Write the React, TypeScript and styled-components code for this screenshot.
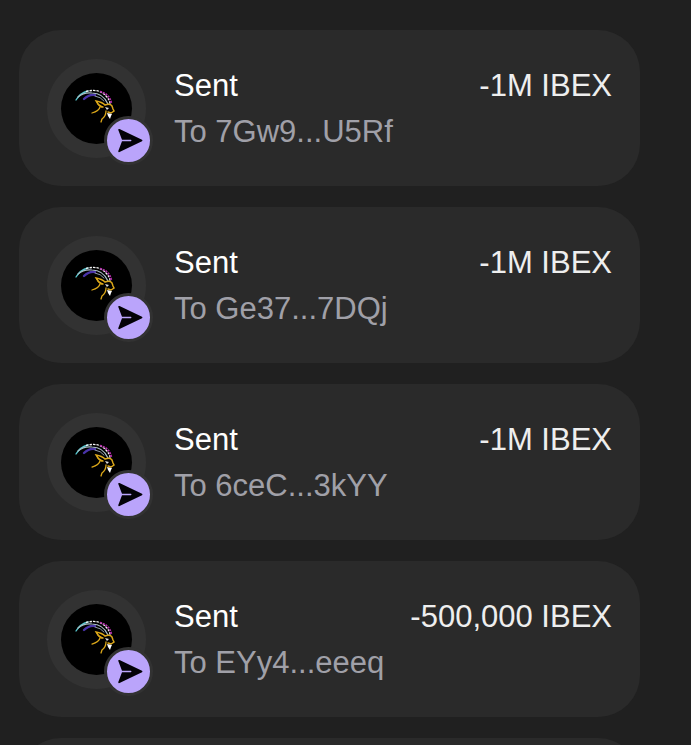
import React from "react";
import styled, { createGlobalStyle } from "styled-components";

const GlobalStyle = createGlobalStyle`
  * { box-sizing: border-box; }
  html { background: #202020; }
  body {
    margin: 0;
    background: #202020;
    color: #fff;
    font-family: "Liberation Sans", Arial, sans-serif;
  }
`;

const List = styled.ul`
  display: flex;
  flex-direction: column;
  gap: 21px;
  height: 100vh;
  overflow: hidden;
  margin: 0;
  padding: 30px 51px 0 19px;
  list-style: none;
`;

const Card = styled.li`
  display: flex;
  flex: none;
  gap: 28px;
  min-height: 156px;
  padding: 29px 28px 28px;
  border-radius: 42px;
  background: #2a2a2a;
`;

const Avatar = styled.div`
  position: relative;
  flex: none;
  display: grid;
  place-items: center;
  width: 99px;
  height: 99px;
  border-radius: 50%;
  background: #323232;
`;

const TokenIcon = styled.svg`
  width: 71px;
  height: 71px;
  border-radius: 50%;
  background: #000;
`;

const Badge = styled.span`
  position: absolute;
  right: -7px;
  bottom: -7px;
  width: 49px;
  height: 49px;
  border: 3px solid #323232;
  border-radius: 50%;
  background: #baa4fb;

  svg {
    display: block;
    width: 43px;
    height: 43px;
  }
`;

const Details = styled.div`
  flex: 1;
  min-width: 0;
  padding-top: 4px;
  font-size: 31px;
  line-height: 46px;
  white-space: nowrap;
`;

const Summary = styled.div`
  display: flex;
  justify-content: space-between;
  gap: 16px;
`;

const Amount = styled.span`
  color: #eee;
`;

const Recipient = styled.div`
  color: #a0a0a8;
`;

const IbexLogo = () => (
  <TokenIcon viewBox="0 0 71 71" fill="none" strokeLinecap="round" aria-hidden="true">
    <path d="M15 27Q19 20 27 18" stroke="#58c9d1" strokeWidth="1.3" />
    <path d="M23 26Q28 21 34 22" stroke="#4933a9" strokeWidth="2.4" />
    <path d="M17 24Q23 19 31 20Q42 20 47 31" stroke="#a9bcc4" strokeWidth="1.2" />
    <path d="M34 23Q40 24 43 28" stroke="#8f9aa8" strokeWidth="1" />
    <path d="M25 18.5Q38 15 45 23Q49 27 49 31" stroke="#f4f4f4" strokeWidth="1.3" strokeDasharray="2.5 1" strokeLinecap="butt" />
    <path d="M39 18.5Q49 21 50.500 31" stroke="#b32dab" strokeWidth="1.8" strokeDasharray="2 1" strokeLinecap="butt" />
    <path d="M41 34Q37 32 35 28Q41 29 44 32Q49 30 51 33L52 36L53 38L50 40L47 39" stroke="#dba719" strokeWidth="1.5" />
    <path d="M36 29Q37 33 42 34M39 34Q38 38 31 40M45 38Q45 43 41 46L40 49" stroke="#dba719" strokeWidth="1.3" />
    <path d="M44 34L48 35L46 37Z" fill="#ddd" />
    <path d="M46 40L51 41L50 43L49 46L47 43Z" fill="#fff" />
  </TokenIcon>
);

const SendIcon = () => (
  <svg viewBox="0 0 43 43" aria-hidden="true">
    <path
      d="M12.5 10L35 20.8Q36 21.5 35 22.2L12.5 33Q11 33.5 11.3 32L15 22.3H24Q25 21.5 24 20.7H15L11.3 11Q11 9.5 12.5 10Z"
      fill="#030207"
    />
  </svg>
);

const transfers = [
  { id: 1, recipient: "7Gw9...U5Rf", amount: "-1M IBEX" },
  { id: 2, recipient: "Ge37...7DQj", amount: "-1M IBEX" },
  { id: 3, recipient: "6ceC...3kYY", amount: "-1M IBEX" },
  { id: 4, recipient: "EYy4...eeeq", amount: "-500,000 IBEX" },
];

export default function App() {
  return (
    <>
      <GlobalStyle />
      <List>
        {transfers.map(({ id, recipient, amount }) => (
          <Card key={id}>
            <Avatar>
              <IbexLogo />
              <Badge>
                <SendIcon />
              </Badge>
            </Avatar>
            <Details>
              <Summary>
                <span>Sent</span>
                <Amount>{amount}</Amount>
              </Summary>
              <Recipient>To {recipient}</Recipient>
            </Details>
          </Card>
        ))}
        <Card aria-hidden="true" />
      </List>
    </>
  );
}
